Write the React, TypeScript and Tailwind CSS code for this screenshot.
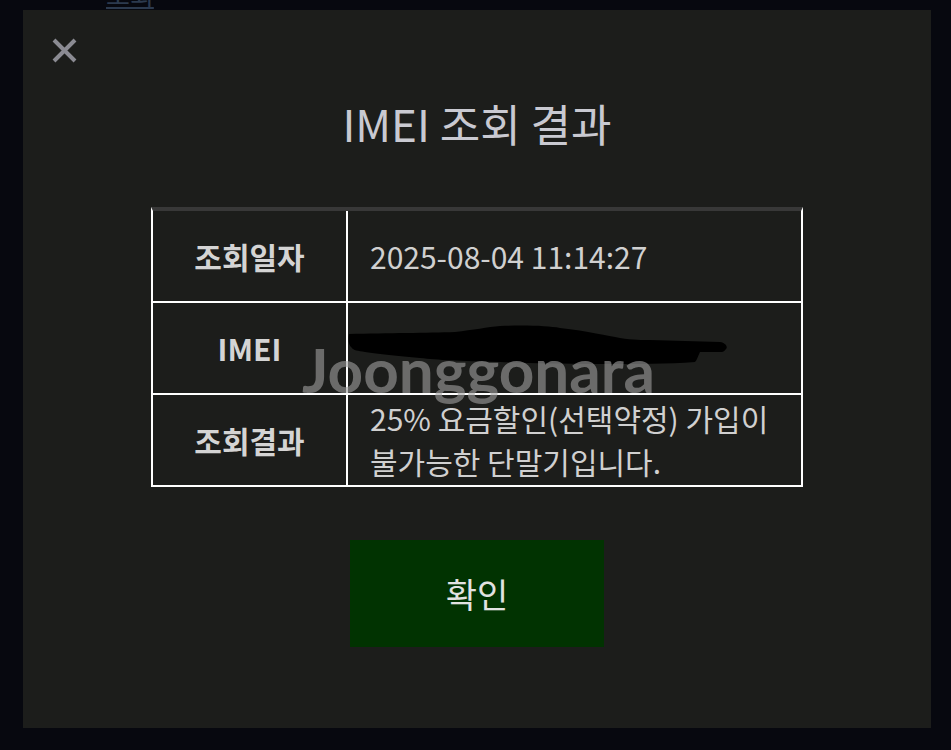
import React from "react";

const font = { fontFamily: '"Noto Sans CJK KR", "Noto Sans", sans-serif' };

export default function App() {
  return (
    <div className="relative w-[951px] h-[750px] bg-[#07080f] overflow-hidden" style={font}>
      {/* page behind the modal */}
      <div className="pl-[106px] -mt-[22px] text-[26px] text-[#2c3a4e] underline leading-[32px]">조회</div>

      {/* modal */}
      <div className="absolute left-[23px] top-[10px] w-[908px] h-[718px] bg-[#1c1d1b] flex flex-col">
        <div className="pl-[29px] pt-[28px]">
          <svg width="25" height="25" viewBox="0 0 25 25">
            <path d="M2 2 L23 23 M23 2 L2 23" stroke="#8b8b93" strokeWidth="4" strokeLinecap="butt" />
          </svg>
        </div>
        <h1 className="mt-[34px] text-center text-[44px] leading-[52px] text-[#c9c9d1] font-normal">
          IMEI 조회 결과
        </h1>

        <div className="relative mx-auto mt-[58px] w-[652px] border-t-4 border-t-[#383838] border-x-2 border-b-2 border-x-white border-b-white">
          <div className="flex h-[90px]">
            <div className="w-[195px] border-r-2 border-white flex items-center justify-center text-[30px] font-bold text-[#d4d4d4]">
              조회일자
            </div>
            <div className="flex-1 flex items-center pl-[22px] text-[30px] text-[#d0d0d0]">
              2025-08-04 11:14:27
            </div>
          </div>
          <div className="flex h-[92px] border-t-2 border-white">
            <div className="w-[195px] border-r-2 border-white flex items-center justify-center text-[30px] font-bold text-[#d4d4d4]">
              IMEI
            </div>
            <div className="relative flex-1">
              <svg className="absolute left-0 top-0" width="380" height="65" viewBox="0 0 380 65">
                <path
                  d="M1 31 C40 30 80 30 107 29 C125 27 140 24 152 23 C180 22 200 23 212 25 C240 28 260 33 272 35 C285 37 295 37 302 37 L372 39 C378 40 380 44 378 46 C376 49 374 49 372 49 L352 49 C350 53 349 57 347 59 C320 61 290 61 252 61 C210 61 180 60 152 59 C110 58 90 57 72 55 C50 53 30 51 17 49 C10 48 5 47 4 45 C0 42 0 35 1 31 Z"
                  fill="#000"
                />
              </svg>
            </div>
          </div>
          <div className="flex h-[92px] border-t-2 border-white">
            <div className="w-[195px] border-r-2 border-white flex items-center justify-center text-[30px] font-bold text-[#d4d4d4]">
              조회결과
            </div>
            <div className="flex-1 flex items-center pl-[22px] text-[30px] leading-[43px] text-[#d0d0d0]">
              <div>
                25% 요금할인(선택약정) 가입이
                <br />
                불가능한 단말기입니다.
              </div>
            </div>
          </div>

          {/* watermark */}
          <div
            className="absolute left-[149px] top-[121px] text-[62px] leading-[74px] font-bold text-[rgba(160,160,160,0.6)] pointer-events-none"
            style={{ fontFamily: 'Lato, "Noto Sans", sans-serif' }}
          >
            Joonggonara
          </div>
        </div>

        <button className="mx-auto mt-[53px] w-[254px] h-[107px] bg-[#013301] text-[34px] text-[#e2e2e2] flex items-center justify-center">
          확인
        </button>
      </div>
    </div>
  );
}
